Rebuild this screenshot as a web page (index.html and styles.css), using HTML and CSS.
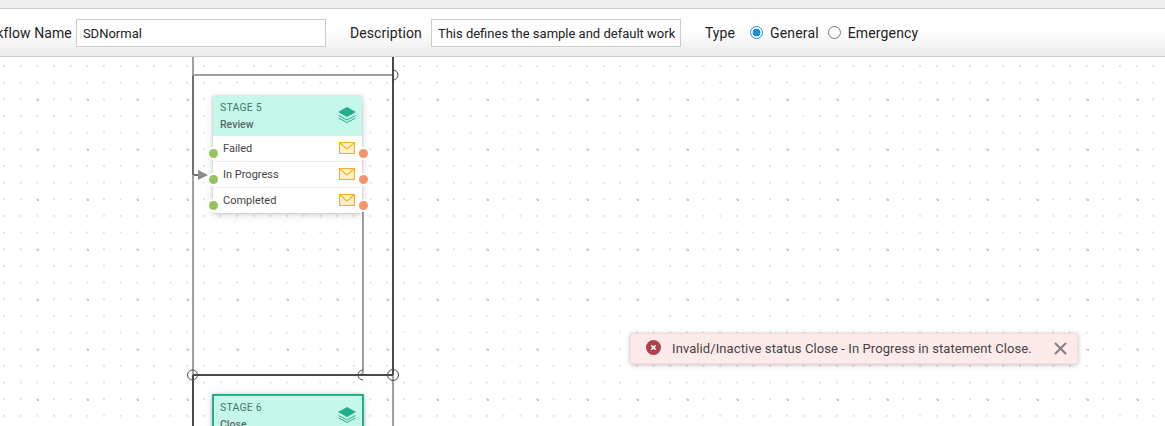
FILE: index.html
```html
<!DOCTYPE html>
<html lang="en">
<head>
    <meta charset="UTF-8">
    <meta name="viewport" content="width=device-width, initial-scale=1.0">
    <title>Workflow Designer</title>
    <link rel="stylesheet" href="styles.css">
</head>
<body>
    <div class="top-strip"></div>

    <div class="toolbar">
        <label class="name-label">Workflow Name</label>
        <input class="field name-field" type="text" value="SDNormal">
        <label class="desc-label">Description</label>
        <input class="field desc-field" type="text" value="This defines the sample and default workflow">
        <span class="type-label">Type</span>
        <span class="radio radio-on"></span>
        <span class="radio-text">General</span>
        <span class="radio"></span>
        <span class="radio-text">Emergency</span>
    </div>

    <div class="canvas">
        <!-- Connectors between the stages -->
        <svg class="links" width="1165" height="369" viewBox="0 57 1165 369">
            <path class="link-light" d="M193 57V75"/>
            <path class="link-mid" d="M193 75V175H199"/>
            <path class="link-light" d="M193 175V375"/>
            <path class="link-light" d="M193 75H393"/>
            <path class="link-light" d="M393 375V426"/>
            <path class="link-light" d="M363 205V371Q363 375 359 375"/>
            <path class="link-dark" d="M393 57V375"/>
            <path class="link-dark" d="M193 375H393"/>
            <path class="link-dark" d="M193 375V426"/>
            <path class="ring" d="M393 70A5 5 0 0 1 393 80"/>
            <circle class="ring" cx="192.500" cy="375" r="5"/>
            <path class="ring" d="M363 370A5 5 0 0 0 363 380"/>
            <circle class="ring" cx="393" cy="375" r="5.500"/>
            <path class="arrow" d="M198 170L208 175L198 180Z"/>
        </svg>

        <div class="stage stage-five">
            <div class="stage-head">
                <div class="stage-title">
                    <div class="stage-no">STAGE 5</div>
                    <div class="stage-name">Review</div>
                </div>
                <svg class="stack" width="18" height="16" viewBox="0 0 18 16">
                    <path class="stack-top" d="M9 0L18 5L9 10L0 5Z"/>
                    <path class="stack-line" d="M0.500 8.500L9 13L17.500 8.500M0.500 11L9 15.500L17.500 11"/>
                </svg>
            </div>
            <div class="stage-row">
                <span>Failed</span>
                <svg class="mail" width="16" height="12" viewBox="0 0 16 12"><rect x="0.500" y="0.500" width="15" height="11"/><path d="M1 1L8 7L15 1"/></svg>
                <i class="port port-in"></i><i class="port port-out"></i>
            </div>
            <div class="stage-row">
                <span>In Progress</span>
                <svg class="mail" width="16" height="12" viewBox="0 0 16 12"><rect x="0.500" y="0.500" width="15" height="11"/><path d="M1 1L8 7L15 1"/></svg>
                <i class="port port-in"></i><i class="port port-out"></i>
            </div>
            <div class="stage-row">
                <span>Completed</span>
                <svg class="mail" width="16" height="12" viewBox="0 0 16 12"><rect x="0.500" y="0.500" width="15" height="11"/><path d="M1 1L8 7L15 1"/></svg>
                <i class="port port-in"></i><i class="port port-out"></i>
            </div>
        </div>

        <div class="stage stage-six">
            <div class="stage-head">
                <div class="stage-title">
                    <div class="stage-no">STAGE 6</div>
                    <div class="stage-name">Close</div>
                </div>
                <svg class="stack" width="18" height="16" viewBox="0 0 18 16">
                    <path class="stack-top" d="M9 0L18 5L9 10L0 5Z"/>
                    <path class="stack-line" d="M0.500 8.500L9 13L17.500 8.500M0.500 11L9 15.500L17.500 11"/>
                </svg>
            </div>
        </div>

        <div class="toast">
            <span class="toast-icon">
                <svg width="15" height="15" viewBox="0 0 15 15"><circle cx="7.500" cy="7.500" r="7.500"/><path d="M5.200 5.200L9.800 9.800M9.800 5.200L5.200 9.800"/></svg>
            </span>
            <span class="toast-text">Invalid/Inactive status Close - In Progress in statement Close.</span>
            <svg class="toast-close" width="13" height="13" viewBox="0 0 13 13"><path d="M1 1L12 12M12 1L1 12"/></svg>
        </div>
    </div>
</body>
</html>
```

FILE: styles.css
```css
html, body {
    margin: 0;
    padding: 0;
    height: 100%;
    overflow: hidden;
}
body {
    font-family: Roboto, "Liberation Sans", sans-serif;
    background: #fff;
    color: #333;
    display: flex;
    flex-direction: column;
}
.top-strip {
    height: 8px;
    background: #f0f0f0;
    border-bottom: 1px solid #cfcfcf;
    flex: none;
}
.toolbar {
    height: 47px;
    flex: none;
    display: flex;
    align-items: center;
    background: linear-gradient(#fff 45%, #ececec);
    border-bottom: 1px solid #cfcfcf;
    font-size: 14px;
    color: #222;
    letter-spacing: 0.1px;
    white-space: nowrap;
    overflow: hidden;
}
.name-label {
    margin-left: -29px;
    margin-right: 4px;
}
.field {
    box-sizing: border-box;
    height: 28px;
    border: 1px solid #ccc;
    background: #fff;
    padding: 1px 5px 0 6px;
    font: 13px Roboto, "Liberation Sans", sans-serif;
    color: #222;
    outline: none;
}
.name-field {
    width: 250px;
}
.desc-label {
    margin-left: 24px;
    margin-right: 9px;
}
.desc-field {
    width: 250px;
}
.type-label {
    margin-left: 24px;
}
.radio {
    box-sizing: border-box;
    width: 13px;
    height: 13px;
    margin-left: 15px;
    border: 1px solid #777;
    border-radius: 50%;
    background: #fff;
}
.radio-on {
    border-color: #1a8fe0;
    background: radial-gradient(circle, #1a8fe0 0 3.600px, #fff 4.200px);
}
.radio-text {
    margin-left: 7px;
    letter-spacing: 0.15px;
}
.radio-text + .radio {
    margin-left: 9px;
}
.canvas {
    position: relative;
    flex: 1;
    overflow: hidden;
    background-color: #fff;
    background-image:
        radial-gradient(circle at 1px 1px, #c6c6d2 0 1px, transparent 1.200px),
        radial-gradient(circle at 1px 1px, #e2e2e6 0 1px, transparent 1.200px);
    background-size: 50px 50px, 16.667px 16.667px;
    background-position: 37px 42px, 3px 8px;
}
.links {
    position: absolute;
    left: 0;
    top: 0;
}
.links path, .links circle {
    fill: none;
}
.link-light {
    stroke: #a0a0a0;
    stroke-width: 2;
}
.link-mid {
    stroke: #707070;
    stroke-width: 2;
}
.link-dark {
    stroke: #4a4a4a;
    stroke-width: 2;
}
.ring {
    stroke: #4a4a4a;
    stroke-width: 1;
}
.links .arrow {
    fill: #8c8c8c;
}
.stage {
    position: absolute;
    box-sizing: border-box;
    width: 149px;
    background: #fff;
    box-shadow: 0 0 3px rgba(0, 0, 0, 0.2), 0 2px 8px rgba(0, 0, 0, 0.15);
}
.stage-five {
    left: 213px;
    top: 39px;
}
.stage-six {
    left: 212px;
    top: 337px;
    width: 152px;
    border: 2px solid #22b08c;
}
.stage-head {
    height: 40px;
    background: #c5f8ea;
    display: flex;
    justify-content: space-between;
    align-items: center;
    padding: 0 6px 3px 7px;
    box-sizing: border-box;
}
.stage-six .stage-head {
    height: 38px;
    padding: 0 6px 1px 6px;
}
.stage-title {
    margin-top: 2px;
}
.stage-no {
    font-size: 10.500px;
    color: #3f7a6c;
    letter-spacing: 0.2px;
    line-height: 17px;
}
.stage-name {
    font-size: 10.500px;
    font-weight: 500;
    color: #5a6a66;
    line-height: 17px;
}
.stack-top {
    fill: #22b08c;
}
.stack-line {
    fill: none;
    stroke: #22b08c;
    stroke-width: 1;
}
.stage-row {
    position: relative;
    height: 26px;
    box-sizing: border-box;
    border-bottom: 1px solid #eee;
    display: flex;
    justify-content: space-between;
    align-items: center;
    padding: 0 7px 0 10px;
    font-size: 11px;
    color: #444;
}
.stage-row:last-child {
    height: 25px;
    border-bottom: none;
}
.mail {
    margin-top: -2px;
}
.mail rect {
    fill: #fff3cf;
    stroke: #f8ae22;
    stroke-width: 1.200;
}
.mail path {
    fill: none;
    stroke: #f8ae22;
    stroke-width: 1.200;
}
.port {
    position: absolute;
    top: 13px;
    width: 9px;
    height: 9px;
    border-radius: 50%;
    box-shadow: 0 0 0 2px #fff;
}
.port-in {
    left: -4px;
    background: #96c45c;
}
.port-out {
    right: -6px;
    background: #f59468;
}
.toast {
    position: absolute;
    left: 630px;
    top: 276px;
    box-sizing: border-box;
    width: 448px;
    height: 31px;
    display: flex;
    align-items: center;
    padding: 0 10px 0 15px;
    background: #feeaea;
    border: 1px solid #f6dcdc;
    border-radius: 2px;
    box-shadow: 0 1px 5px rgba(0, 0, 0, 0.25);
    font-size: 13px;
    color: #444;
    letter-spacing: 0.09px;
}
.toast-icon {
    display: flex;
    margin-right: 11px;
    margin-top: -2px;
}
.toast-icon circle {
    fill: #b24048;
}
.toast-icon path {
    fill: none;
    stroke: #fff;
    stroke-width: 1.500;
}
.toast-text {
    flex: 1;
}
.toast-close path {
    fill: none;
    stroke: #808080;
    stroke-width: 2;
}
```
